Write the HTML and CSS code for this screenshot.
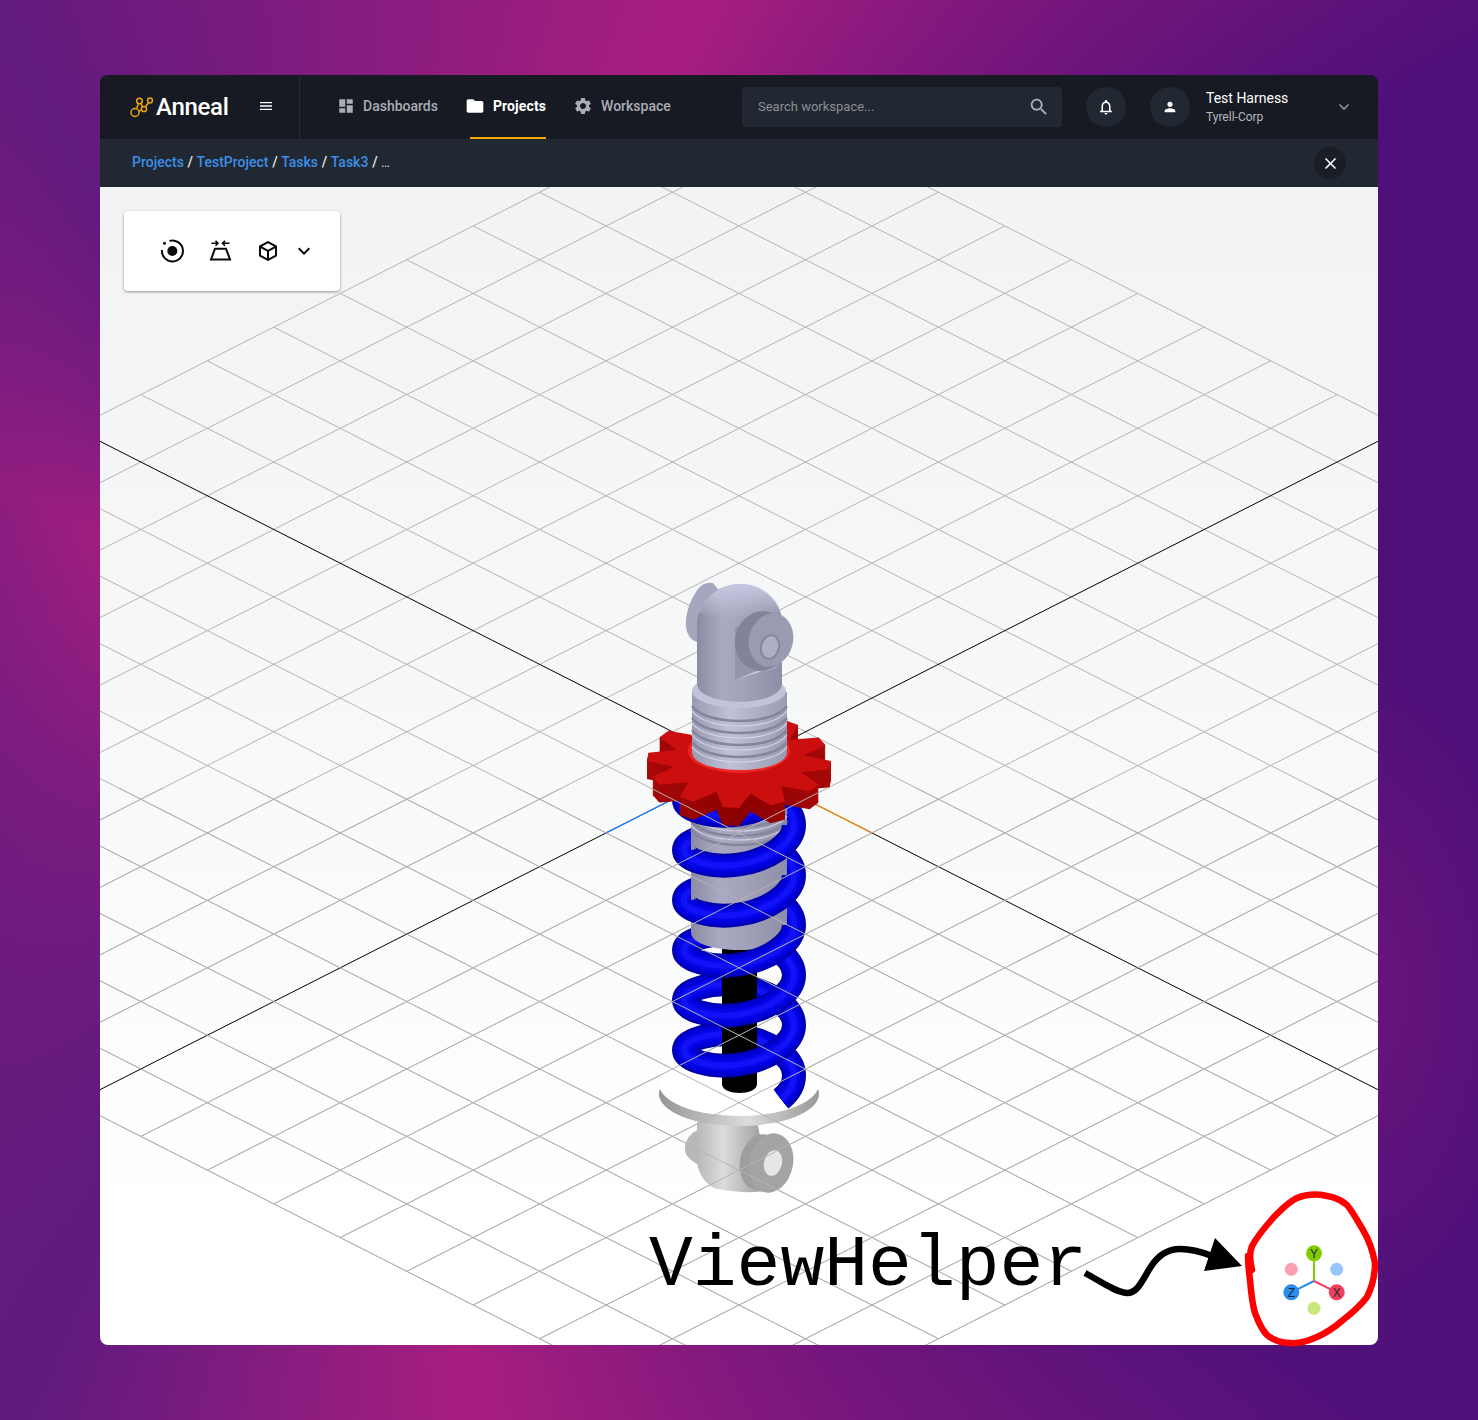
FILE: index.html
```
<!DOCTYPE html>
<html lang="en">
<head>
<meta charset="utf-8">
<title>Anneal</title>
<link rel="stylesheet" href="styles.css">
</head>
<body>
<main class="app">
  <header class="topbar">
    <div class="brand">
      <svg class="logo" viewBox="128 96 26 22" width="26" height="22">
        <path class="logo-line" d="M135 112.5 139.5 101 144 109 150 100.5M135 112.5 144 109"/>
        <circle class="logo-node" cx="135" cy="112.5" r="4"/>
        <circle class="logo-node" cx="144" cy="109" r="2.6"/>
        <circle class="logo-node" cx="139.5" cy="101" r="2.8"/>
        <circle class="logo-node" cx="150" cy="100.5" r="2.4"/>
      </svg>
      <span class="brand-name">Anneal</span>
      <svg class="icon menu" viewBox="0 0 24 24" width="16" height="16"><path d="M3 18h18v-2H3v2zm0-5h18v-2H3v2zm0-7v2h18V6H3z"/></svg>
    </div>
    <nav class="nav">
      <a class="nav-item">
        <svg class="icon" viewBox="0 0 24 24" width="18" height="18"><path d="M3 13h8V3H3v10zm0 8h8v-6H3v6zm10 0h8V11h-8v10zm0-18v6h8V3h-8z"/></svg>
        <span>Dashboards</span>
      </a>
      <a class="nav-item active">
        <svg class="icon" viewBox="0 0 24 24" width="20" height="20"><path d="M10 4H4c-1.1 0-1.99.9-1.99 2L2 18c0 1.1.9 2 2 2h16c1.1 0 2-.9 2-2V8c0-1.1-.9-2-2-2h-8l-2-2z"/></svg>
        <span>Projects</span>
      </a>
      <a class="nav-item">
        <svg class="icon" viewBox="0 0 24 24" width="20" height="20"><path d="M19.14 12.94c.04-.3.06-.61.06-.94 0-.32-.02-.64-.07-.94l2.03-1.58c.18-.14.23-.41.12-.61l-1.92-3.32c-.12-.22-.37-.29-.59-.22l-2.39.96c-.5-.38-1.03-.7-1.62-.94l-.36-2.54c-.04-.24-.24-.41-.48-.41h-3.84c-.24 0-.43.17-.47.41l-.36 2.54c-.59.24-1.13.57-1.62.94l-2.39-.96c-.22-.08-.47 0-.59.22L2.74 8.87c-.12.21-.08.47.12.61l2.03 1.58c-.05.3-.09.63-.09.94s.02.64.07.94l-2.03 1.58c-.18.14-.23.41-.12.61l1.92 3.32c.12.22.37.29.59.22l2.39-.96c.5.38 1.03.7 1.62.94l.36 2.54c.05.24.24.41.48.41h3.84c.24 0 .44-.17.47-.41l.36-2.54c.59-.24 1.13-.56 1.62-.94l2.39.96c.22.08.47 0 .59-.22l1.92-3.32c.12-.22.07-.47-.12-.61l-2.01-1.58zM12 15.6c-1.98 0-3.6-1.62-3.6-3.6s1.62-3.6 3.6-3.6 3.6 1.62 3.6 3.6-1.62 3.6-3.6 3.6z"/></svg>
        <span>Workspace</span>
      </a>
    </nav>
    <div class="tools">
      <div class="search">
        <span class="search-text">Search workspace...</span>
        <svg class="icon" viewBox="0 0 24 24" width="22" height="22"><path d="M15.5 14h-.79l-.28-.27C15.41 12.59 16 11.11 16 9.5 16 5.91 13.09 3 9.5 3S3 5.91 3 9.5 5.91 16 9.5 16c1.61 0 3.09-.59 4.23-1.57l.27.28v.79l5 4.99L20.49 19l-4.99-5zm-6 0C7.01 14 5 11.99 5 9.5S7.01 5 9.5 5 14 7.01 14 9.5 11.99 14 9.5 14z"/></svg>
      </div>
      <div class="round">
        <svg class="icon white" viewBox="0 0 24 24" width="18" height="18"><path d="M12 22c1.1 0 2-.9 2-2h-4c0 1.1.9 2 2 2zm6-6v-5c0-3.07-1.63-5.64-4.5-6.32V4c0-.83-.67-1.5-1.5-1.5s-1.5.67-1.5 1.5v.68C7.64 5.36 6 7.92 6 11v5l-2 2v1h16v-1l-2-2zm-2 1H8v-6c0-2.48 1.51-4.5 4-4.5s4 2.02 4 4.5v6z"/></svg>
      </div>
      <div class="user">
        <div class="round">
          <svg class="icon white" viewBox="0 0 24 24" width="16" height="16"><path d="M12 12c2.21 0 4-1.79 4-4s-1.79-4-4-4-4 1.79-4 4 1.79 4 4 4zm0 2c-2.67 0-8 1.34-8 4v2h16v-2c0-2.66-5.33-4-8-4z"/></svg>
        </div>
        <div class="user-text">
          <span class="user-name">Test Harness</span>
          <span class="user-org">Tyrell-Corp</span>
        </div>
        <svg class="chevron" viewBox="0 0 18 18" width="18" height="18"><path d="M4.5 6.5 9 11l4.500-4.500"/></svg>
      </div>
    </div>
  </header>

  <div class="crumbs">
    <p class="crumb-path"><a>Projects</a> / <a>TestProject</a> / <a>Tasks</a> / <a>Task3</a> / <span class="crumb-more">...</span></p>
    <button class="close" type="button" aria-label="Close">
      <svg class="icon white" viewBox="0 0 24 24" width="19" height="19"><path d="M19 6.41L17.59 5 12 10.59 6.41 5 5 6.41 10.59 12 5 17.59 6.41 19 12 13.41 17.59 19 19 17.59 13.41 12z"/></svg>
    </button>
  </div>

  <section class="viewer">
    <svg class="scene" viewBox="100 187 1278 1158">
      <defs>
        <linearGradient id="steel">
          <stop offset="0" stop-color="#8b8ba3"/><stop offset=".3" stop-color="#a9a9c2"/><stop offset=".55" stop-color="#a2a2ba"/><stop offset="1" stop-color="#8e8ea6"/>
        </linearGradient>
        <linearGradient id="thread">
          <stop offset="0" stop-color="#9a9ab2"/><stop offset=".4" stop-color="#c0c0d6"/><stop offset="1" stop-color="#9a9ab2"/>
        </linearGradient>
        <linearGradient id="tophead" x2="0" y2="1">
          <stop offset="0" stop-color="#c8c8e2"/><stop offset="1" stop-color="#c8c8e2" stop-opacity="0"/>
        </linearGradient>
        <linearGradient id="grey">
          <stop offset="0" stop-color="#b8b8b8"/><stop offset=".35" stop-color="#dcdcdc"/><stop offset="1" stop-color="#909090"/>
        </linearGradient>
        <linearGradient id="rim">
          <stop offset="0" stop-color="#949494"/><stop offset=".55" stop-color="#dcdcdc"/><stop offset="1" stop-color="#999"/>
        </linearGradient>
        <linearGradient id="red-side">
          <stop offset="0" stop-color="#a80808"/><stop offset=".5" stop-color="#8a0000"/><stop offset="1" stop-color="#a80808"/>
        </linearGradient>
        <path id="grid-lines" d="M-10 -10H10M-10 -9H10M-10 -8H10M-10 -7H10M-10 -6H10M-10 -5H10M-10 -4H10M-10 -3H10M-10 -2H10M-10 -1H10M-10 1H10M-10 2H10M-10 3H10M-10 4H10M-10 5H10M-10 6H10M-10 7H10M-10 8H10M-10 9H10M-10 10H10M-10 -10V10M-9 -10V10M-8 -10V10M-7 -10V10M-6 -10V10M-5 -10V10M-4 -10V10M-3 -10V10M-2 -10V10M-1 -10V10M1 -10V10M2 -10V10M3 -10V10M4 -10V10M5 -10V10M6 -10V10M7 -10V10M8 -10V10M9 -10V10M10 -10V10"/>
        <path id="front-path" d="M794 0C794 18.300 767.800 35.300 739 39.500C710.200 43.700 684 35 684 25"/>
        <path id="back-path" d="M684 25C684 15 710.200 6.300 739 10.500C767.800 14.700 794 31.700 794 50"/>
        <path id="end-path" d="M794 1075C794 1085 790 1092 781 1099"/>
        <g id="front">
          <use href="#front-path" class="tube tube-a"/><use href="#front-path" class="tube tube-b"/><use href="#front-path" class="tube tube-c"/><use href="#front-path" class="tube tube-d"/><use href="#front-path" class="tube tube-e"/>
        </g>
        <g id="back">
          <use href="#back-path" class="tube tube-a"/><use href="#back-path" class="tube tube-b"/><use href="#back-path" class="tube tube-c"/><use href="#back-path" class="tube tube-d"/><use href="#back-path" class="tube tube-e"/>
        </g>
        <polygon id="gear" points="831,761 829.6,769.2 801,772.3 818.7,784.5 809.5,791.2 781.4,786.3 785,801.7 770.5,805.2 750.5,793.5 739,808 723,807.3 716.4,792 693,801.7 679.8,797 688.4,782.2 659.3,784.5 652.5,777 674,766.7 647,761 648.4,752.8 677,749.7 659.3,737.5 668.5,730.8 696.6,735.7 693,720.3 707.5,716.8 727.5,728.500 739,714 755,714.7 761.6,730 785,720.3 798.2,725 789.6,739.8 818.7,737.5 825.5,744.9 804,755.3"/>
        <clipPath id="below-plane"><rect x="100" y="788" width="1278" height="557"/></clipPath>
      </defs>

      <g transform="matrix(66.46 33.72 -66.46 33.72 739 765.5)">
        <use href="#grid-lines" class="grid"/>
        <path class="axis" d="M-10 0H10M0 -10V10"/>
        <path class="axis axis-x" d="M0 0H2"/>
        <path class="axis axis-z" d="M0 0V2"/>
      </g>

      <!-- lower eye and spring seat -->
      <path class="lump" d="M710 1127C692 1128 684 1140 685 1150C686 1158 692 1162 710 1170Z"/>
      <path class="eye-body" d="M697 1122H757L772 1190C755 1194 725 1192 712 1187C703 1181 697 1170 697 1160Z"/>
      <ellipse class="eye-back" cx="760" cy="1162" rx="20" ry="28" transform="rotate(12 760 1162)"/>
      <ellipse class="eye-ring" cx="771" cy="1163" rx="22" ry="30" transform="rotate(12 771 1163)"/>
      <ellipse class="eye-hole" cx="773" cy="1163" rx="9" ry="13" transform="rotate(12 773 1163)"/>
      <ellipse class="disc-rim" cx="739" cy="1094" rx="80" ry="32"/>
      <ellipse class="disc-top" cx="739" cy="1084" rx="80" ry="32"/>

      <!-- spring, back half -->
      <use href="#back" y="775"/><use href="#back" y="825"/><use href="#back" y="875"/><use href="#back" y="925"/><use href="#back" y="975"/><use href="#back" y="1025"/>

      <!-- rod and damper body -->
      <path class="rod" d="M722 940H757V1084C757 1096 722 1096 722 1084Z"/>
      <path class="cyl" d="M691 800H787V932C787 956 691 956 691 932Z"/>
      <path class="groove" d="M691 812C705 832 773 832 787 812M691 821C705 841 773 841 787 821M691 830C705 850 773 850 787 830"/>
      <path class="groove-hi" d="M691 816C705 836 773 836 787 816M691 825C705 845 773 845 787 825"/>

      <!-- spring, front half -->
      <use href="#front" y="775"/><use href="#front" y="825"/><use href="#front" y="875"/><use href="#front" y="925"/><use href="#front" y="975"/><use href="#front" y="1025"/>
      <use href="#end-path" class="tube tube-a"/><use href="#end-path" class="tube tube-b"/><use href="#end-path" class="tube tube-c"/><use href="#end-path" class="tube tube-d"/><use href="#end-path" class="tube tube-e"/>

      <!-- gear -->
      <use href="#gear" y="18" class="gear-side"/><use href="#gear" y="17" class="gear-side"/><use href="#gear" y="16" class="gear-side"/><use href="#gear" y="15" class="gear-side"/><use href="#gear" y="14" class="gear-side"/><use href="#gear" y="13" class="gear-side"/><use href="#gear" y="12" class="gear-side"/><use href="#gear" y="11" class="gear-side"/><use href="#gear" y="10" class="gear-side"/><use href="#gear" y="9" class="gear-side"/><use href="#gear" y="8" class="gear-side"/><use href="#gear" y="7" class="gear-side"/><use href="#gear" y="6" class="gear-side"/><use href="#gear" y="5" class="gear-side"/><use href="#gear" y="4" class="gear-side"/><use href="#gear" y="3" class="gear-side"/><use href="#gear" y="2" class="gear-side"/><use href="#gear" y="1" class="gear-side"/>
      <use href="#gear" class="gear-top"/>
      <ellipse class="gear-ring" cx="739" cy="751" rx="51" ry="22"/>

      <!-- threaded body and head -->
      <path class="thread" d="M692 692H787V752C787 776 692 776 692 752Z"/>
      <path class="groove" d="M692 706C706 726 773 726 787 706M692 718C706 738 773 738 787 718M692 730C706 750 773 750 787 730M692 742C706 762 773 762 787 742"/>
      <path class="groove-hi" d="M692 711C706 731 773 731 787 711M692 723C706 743 773 743 787 723M692 735C706 755 773 755 787 735M692 747C706 767 773 767 787 747"/>
      <ellipse class="rim-top" cx="739" cy="691" rx="47" ry="17"/>
      <path class="lump-steel" d="M713 583C706 582 700 585 696 592C689 602 685 616 686 627C687 635 691 640 697 642L735 610Z"/>
      <path class="cyl" d="M697 683V625C697 600 718 584 740 584C760 584 782 600 782 622V683C782 708 697 708 697 683Z"/>
      <path class="head-top" d="M698 612C706 595 722 584 740 584C758 584 772 592 782 612C760 622 720 622 698 612Z"/>
      <path class="cut" d="M735 627 782 618V664L735 680Z"/>
      <path class="cut-hi" d="M735 680 757 671C765 672 773 669 778 666Z"/>
      <ellipse class="boss" cx="762" cy="641" rx="27" ry="30" transform="rotate(14 762 641)"/>
      <ellipse class="boss-face" cx="771" cy="640" rx="22" ry="27" transform="rotate(14 771 640)"/>
      <ellipse class="bore" cx="770" cy="647" rx="9" ry="12" transform="rotate(14 770 647)"/>

      <g clip-path="url(#below-plane)">
        <g transform="matrix(66.46 33.72 -66.46 33.72 739 765.5)">
          <use href="#grid-lines" class="grid"/>
        </g>
      </g>

      <!-- view helper gizmo -->
      <path class="giz-line giz-y" d="M1314 1281V1253"/>
      <path class="giz-line giz-z" d="M1314 1281 1291.300 1292.300"/>
      <path class="giz-line giz-x" d="M1314 1281 1336.700 1292.300"/>
      <circle class="giz-neg-x" cx="1291.300" cy="1269.300" r="6.500"/>
      <circle class="giz-neg-z" cx="1336.700" cy="1269.300" r="6.500"/>
      <circle class="giz-neg-y" cx="1314" cy="1308.300" r="6.500"/>
      <circle class="giz-y-dot" cx="1314" cy="1253.300" r="8"/>
      <circle class="giz-z-dot" cx="1291.300" cy="1292.300" r="8"/>
      <circle class="giz-x-dot" cx="1336.700" cy="1292.300" r="8"/>
      <text class="giz-label" x="1314" y="1257.500">Y</text>
      <text class="giz-label" x="1291.300" y="1296.500">Z</text>
      <text class="giz-label" x="1336.700" y="1296.500">X</text>
    </svg>

    <svg class="notes" viewBox="100 187 1278 1158">
      <text class="note-text" x="649" y="1285">ViewHelper</text>
      <path class="note-arrow" d="M1085 1273C1100 1281 1115 1292 1127 1293C1138 1293 1143 1279 1150 1268C1158 1255 1168 1249 1180 1249C1192 1249 1202 1252 1212 1256"/>
      <polygon class="note-head" points="1215,1238 1242,1266 1204,1271"/>
      <path class="note-ring" d="M1248 1256C1250 1262 1251 1266 1252 1270C1250 1260 1249 1254 1252 1246C1258 1235 1266 1226 1273 1218C1281 1210 1288 1202 1297 1198C1307 1194 1318 1194 1327 1196C1335 1197 1341 1200 1347 1205C1353 1212 1358 1222 1363 1230C1369 1240 1373 1252 1375 1263C1375 1276 1372 1287 1367 1297C1360 1306 1352 1313 1343 1320C1335 1327 1326 1333 1317 1337C1308 1341 1299 1344 1290 1343C1281 1343 1273 1340 1267 1335C1261 1329 1258 1321 1255 1313C1252 1303 1251 1292 1250 1280C1249 1272 1248 1264 1248 1256Z"/>
    </svg>

    <div class="toolbar">
      <svg class="tool" viewBox="0 0 24 24" width="24" height="24">
        <circle class="tool-dot" cx="12.300" cy="12" r="5"/>
        <path class="tool-stroke" d="M9.500 1.900A10.500 10.500 0 1 1 2 11"/>
        <circle class="tool-dot" cx="4.500" cy="4.300" r="1.500"/>
      </svg>
      <svg class="tool" viewBox="0 0 24 24" width="24" height="24">
        <path class="tool-stroke" d="M7 9.700H18L22 20.500H3Z"/>
        <path class="tool-stroke thin" d="M3.500 4.300H10M7.500 1.800 10 4.300 7.500 6.800M21.500 4.300H14.500M17 1.800 14.500 4.300 17 6.800"/>
      </svg>
      <svg class="tool" viewBox="0 0 24 24" width="24" height="24"><path class="tool-dot" d="M21,16.5C21,16.88 20.79,17.21 20.47,17.38L12.57,21.82C12.41,21.94 12.21,22 12,22C11.79,22 11.59,21.94 11.43,21.82L3.53,17.38C3.21,17.21 3,16.88 3,16.5V7.5C3,7.12 3.21,6.79 3.53,6.62L11.43,2.18C11.59,2.06 11.79,2 12,2C12.21,2 12.41,2.06 12.57,2.18L20.47,6.62C20.79,6.79 21,7.12 21,7.5V16.5M12,4.15L6.04,7.5L12,10.85L17.96,7.5L12,4.15M5,15.91L11,19.29V12.58L5,9.21V15.91M19,15.91V9.21L13,12.58V19.29L19,15.91Z"/></svg>
      <svg class="tool-caret" viewBox="0 0 24 24" width="24" height="24"><path class="tool-dot" d="M16.590 8.590 12 13.170 7.410 8.590 6 10l6 6 6-6z"/></svg>
    </div>
  </section>
</main>
</body>
</html>
```

FILE: styles.css
```
* { box-sizing: border-box; }

html, body { margin: 0; height: 100%; }

body {
  width: 1478px;
  height: 1420px;
  padding: 75px 100px;
  font-family: Roboto, "Liberation Sans", sans-serif;
  background:
    linear-gradient(90deg, rgba(95, 26, 126, .28), rgba(95, 26, 126, 0) 100px),
    radial-gradient(ellipse 170px 330px at 1360px 990px, rgba(168, 30, 128, .3), rgba(168, 30, 128, 0)),
    conic-gradient(from 0deg at 361px 701px,
      #861c7f 0deg, #a81e80 26deg, #4f1079 60deg, #4f1079 100deg, #50117a 125deg,
      #a81e80 171deg, #5f1a7e 206deg, #a01e80 302deg, #621a7e 332deg, #861c7f 360deg);
}

.app {
  display: flex;
  flex-direction: column;
  height: 1270px;
  border-radius: 8px;
}

/* top bar */
.topbar {
  display: flex;
  align-items: stretch;
  height: 64px;
  flex: none;
  background: #171a22;
  border-radius: 8px 8px 0 0;
}

.brand {
  display: flex;
  align-items: center;
  width: 200px;
  padding-left: 28px;
  border-right: 1px solid #262a33;
}

.logo { flex: none; }
.logo-line, .logo-node { fill: none; stroke: #e9a60e; stroke-width: 1.5; }
.logo-node { fill: #171a22; }

.brand-name {
  margin-left: 2px;
  margin-bottom: 1px;
  color: #fff;
  font-size: 24px;
  font-weight: 500;
  letter-spacing: -.3px;
}

.icon { fill: #a9adb5; flex: none; }
.icon.white { fill: #fff; }
.menu { margin-left: 29px; margin-bottom: 2px; fill: #fff; }

.nav {
  display: flex;
  gap: 27px;
  margin-left: 37px;
}

.nav-item {
  position: relative;
  display: flex;
  align-items: center;
  gap: 8px;
  padding-bottom: 2px;
  color: #a9adb5;
  font-size: 14px;
  font-weight: 500;
}

.nav-item.active {
  color: #fff;
  font-weight: 700;
  letter-spacing: .1px;
}
.nav-item.active .icon { fill: #fff; }
.nav-item.active::after {
  content: "";
  position: absolute;
  left: 5px;
  right: 0;
  bottom: 0;
  height: 2px;
  background: #f0a800;
}

.tools {
  display: flex;
  align-items: center;
  gap: 24px;
  margin-left: auto;
  padding-right: 25px;
}

.search {
  display: flex;
  align-items: center;
  justify-content: space-between;
  width: 320px;
  height: 40px;
  padding: 0 12px 0 16px;
  border-radius: 4px;
  background: #222831;
}

.search-text { margin-bottom: 2px; color: #8a8e96; font-size: 13px; }

.round {
  display: flex;
  align-items: center;
  justify-content: center;
  width: 40px;
  height: 40px;
  flex: none;
  border-radius: 50%;
  background: #222831;
}

.user {
  display: flex;
  align-items: center;
  gap: 16px;
  width: 203px;
}

.user-text {
  display: flex;
  flex-direction: column;
  gap: 4px;
  flex: 1;
}

.user-name { color: #fff; font-size: 14px; line-height: 16px; }
.user-org { color: #b5b8be; font-size: 12px; line-height: 14px; }

.chevron { fill: none; stroke: #8d9198; stroke-width: 1.6; flex: none; }

/* breadcrumb bar */
.crumbs {
  display: flex;
  align-items: center;
  justify-content: space-between;
  height: 48px;
  flex: none;
  padding: 0 32px;
  background: #222831;
}

.crumb-path {
  margin: 0 0 2px;
  color: #e8e9eb;
  font-size: 14px;
  font-weight: 500;
  word-spacing: .3px;
}

.crumb-path a { color: #3a8fe8; }
.crumb-more { font-size: 10px; }

.close {
  display: flex;
  align-items: center;
  justify-content: center;
  width: 32px;
  height: 32px;
  padding: 0;
  border: 0;
  border-radius: 50%;
  background: #1a1d25;
}

/* 3D viewer */
.viewer {
  position: relative;
  flex: 1;
  min-height: 0;
  border-radius: 0 0 8px 8px;
  background: linear-gradient(#f2f3f5, #f7f8f8 45%, #fff 90%);
}

.scene {
  display: block;
  width: 100%;
  height: 100%;
  border-radius: 0 0 8px 8px;
}

.notes {
  position: absolute;
  inset: 0;
  width: 100%;
  height: 100%;
  overflow: visible;
  pointer-events: none;
}

.grid {
  fill: none;
  stroke: #b4b4b4;
  stroke-width: 1;
}

#grid-lines { vector-effect: non-scaling-stroke; }

.axis {
  fill: none;
  stroke: #000;
  stroke-width: 1;
  vector-effect: non-scaling-stroke;
}
.axis-x { stroke: #ff8a1c; stroke-width: 1.3; }
.axis-z { stroke: #1e88ff; stroke-width: 1.3; }

/* model */
.tube { fill: none; }
.tube-a { stroke: #0000a8; stroke-width: 24; }
.tube-b { stroke: #0000c4; stroke-width: 21; }
.tube-c { stroke: #0000d8; stroke-width: 17; }
.tube-d { stroke: #0505e8; stroke-width: 12; }
.tube-e { stroke: #1212f8; stroke-width: 6; }

.lump { fill: #b8b8b8; }
.eye-body { fill: url(#grey); }
.eye-back { fill: #9e9e9e; }
.eye-ring { fill: #a4a4a4; }
.eye-hole { fill: #e6e6e6; }
.disc-rim { fill: url(#rim); }
.disc-top { fill: #fff; }
.rod { fill: #000; }
.cyl { fill: url(#steel); }
.thread { fill: url(#thread); }
.groove { fill: none; stroke: #8585a0; stroke-width: 2.5; }
.groove-hi { fill: none; stroke: #d6d6ea; stroke-width: 1.2; }
.gear-side { fill: url(#red-side); }
.gear-top { fill: #cb0f0f; }
.gear-ring { fill: #ee2424; }
.rim-top { fill: #c2c2da; }
.lump-steel { fill: #a6a6be; }
.head-top { fill: url(#tophead); }
.cut { fill: #9494ac; }
.cut-hi { fill: #cfcfe8; }
.boss { fill: #82829a; }
.boss-face { fill: #9a9ab0; }
.bore { fill: #aeaec8; stroke: #85859d; stroke-width: 2; }

/* gizmo */
.giz-line { fill: none; stroke-width: 2; }
.giz-y { stroke: #80cc00; }
.giz-z { stroke: #2a8cf0; }
.giz-x { stroke: #f0405f; }
.giz-y-dot { fill: #80cc00; }
.giz-z-dot { fill: #2a8cf0; }
.giz-x-dot { fill: #f0405f; }
.giz-neg-x { fill: #ffa0b0; }
.giz-neg-z { fill: #96c5ff; }
.giz-neg-y { fill: #c8e87e; }
.giz-label {
  fill: #1c2a30;
  font-family: "Liberation Sans", sans-serif;
  font-size: 12px;
  text-anchor: middle;
}

/* hand annotation */
.note-text {
  fill: #000;
  font-family: "Liberation Mono", monospace;
  font-size: 73px;
}
.note-arrow { fill: none; stroke: #000; stroke-width: 6.5; }
.note-head { fill: #000; }
.note-ring { fill: none; stroke: #ff0000; stroke-width: 6.5; stroke-linejoin: round; }

/* floating toolbar */
.toolbar {
  position: absolute;
  top: 24px;
  left: 24px;
  display: flex;
  align-items: center;
  gap: 24px;
  width: 216px;
  height: 80px;
  padding-left: 36px;
  border-radius: 4px;
  background: #fff;
  box-shadow: 0 1px 3px rgba(0, 0, 0, .4);
}

.tool, .tool-caret { flex: none; }
.tool-caret { margin-left: -12px; }
.tool-dot { fill: #0a0a0a; }
.tool-stroke { fill: none; stroke: #0a0a0a; stroke-width: 2; }
.tool-stroke.thin { stroke-width: 1.6; }
```
